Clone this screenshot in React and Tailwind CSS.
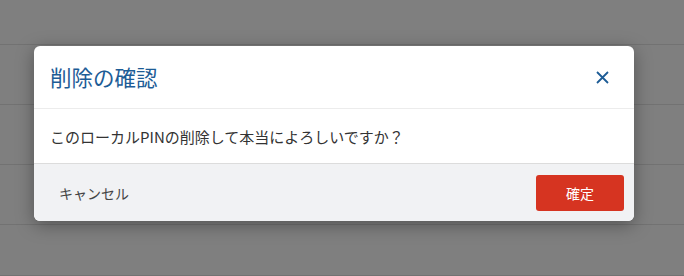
import React from "react";

const rows = [45, 60, 60, 60, 51];

export default function App() {
  return (
    <div
      className="relative w-[684px] h-[276px] overflow-hidden bg-white"
      style={{ fontFamily: '"Noto Sans CJK JP", "Noto Sans", sans-serif' }}
    >
      {/* page behind the dialog */}
      <div className="flex flex-col">
        {rows.map((h, i) => (
          <div key={i} className="border-b border-[#e4e4e4]" style={{ height: h }} />
        ))}
      </div>

      {/* overlay */}
      <div className="absolute inset-0 bg-black/50 pt-[46px] pl-[34px]">
        <div className="w-[600px] bg-white rounded-md shadow-[0_4px_18px_rgba(0,0,0,0.35)] overflow-hidden">
          {/* header */}
          <div className="h-[63px] flex items-center justify-between pl-4 pr-[25px] border-b border-[#ececec]">
            <h2 className="text-[21.5px] text-[#1d5c96] leading-none">削除の確認</h2>
            <button className="text-[#1d5c96]">
              <svg width="13" height="13" viewBox="0 0 13 13" fill="none">
                <path d="M1 1L12 12M12 1L1 12" stroke="currentColor" strokeWidth="1.8" />
              </svg>
            </button>
          </div>

          {/* body */}
          <div className="h-[55px] flex items-center px-4 border-b border-[#dcdcdc]">
            <p className="text-[15px] text-[#333333] leading-none">
              このローカルPINの削除して本当によろしいですか？
            </p>
          </div>

          {/* footer */}
          <div className="h-[57px] flex items-center justify-between bg-[#f1f2f4] pl-[25px] pr-[10px]">
            <button className="text-sm text-[#444444]">キャンセル</button>
            <button className="w-[88px] h-9 rounded-[3px] bg-[#d63421] text-sm text-white">確定</button>
          </div>
        </div>
      </div>
    </div>
  );
}
